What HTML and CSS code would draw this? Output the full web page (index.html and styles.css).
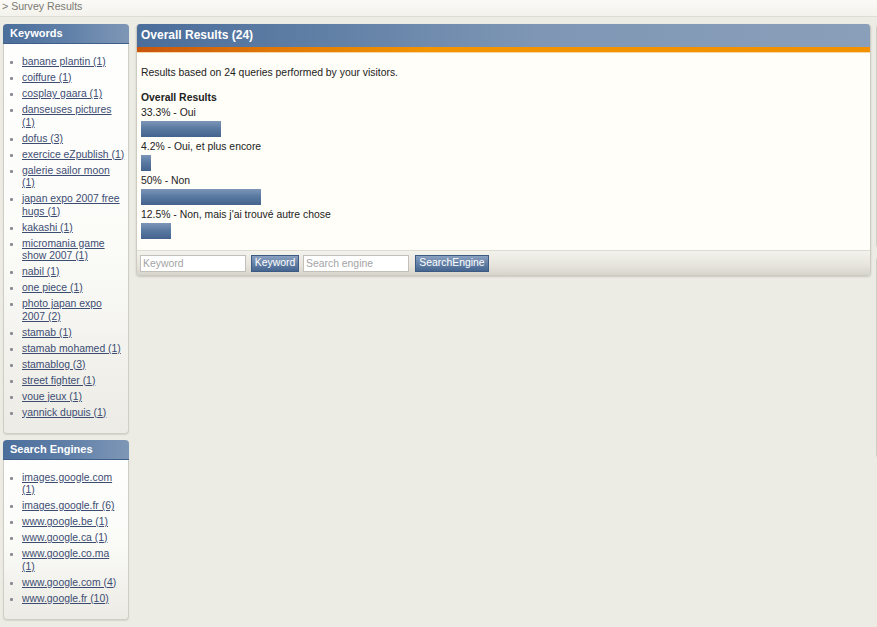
FILE: index.html
```html
<!DOCTYPE html>
<html>
<head>
<meta charset="utf-8">
<title>Survey Results</title>
<link rel="stylesheet" href="styles.css">
</head>
<body>
<div class="crumb">&gt; Survey Results</div>
<div class="layout">
  <div class="side">
    <div class="box">
      <div class="box-head">Keywords</div>
      <ul class="links">
        <li><a href="#">banane plantin (1)</a></li>
        <li><a href="#">coiffure (1)</a></li>
        <li><a href="#">cosplay gaara (1)</a></li>
        <li><a href="#">danseuses pictures (1)</a></li>
        <li><a href="#">dofus (3)</a></li>
        <li><a href="#">exercice eZpublish (1)</a></li>
        <li><a href="#">galerie sailor moon (1)</a></li>
        <li><a href="#">japan expo 2007 free hugs (1)</a></li>
        <li><a href="#">kakashi (1)</a></li>
        <li><a href="#">micromania game show 2007 (1)</a></li>
        <li><a href="#">nabil (1)</a></li>
        <li><a href="#">one piece (1)</a></li>
        <li><a href="#">photo japan expo 2007 (2)</a></li>
        <li><a href="#">stamab (1)</a></li>
        <li><a href="#">stamab mohamed (1)</a></li>
        <li><a href="#">stamablog (3)</a></li>
        <li><a href="#">street fighter (1)</a></li>
        <li><a href="#">voue jeux (1)</a></li>
        <li><a href="#">yannick dupuis (1)</a></li>
      </ul>
    </div>
    <div class="box">
      <div class="box-head">Search Engines</div>
      <ul class="links links-narrow">
        <li><a href="#">images.google.com (1)</a></li>
        <li><a href="#">images.google.fr (6)</a></li>
        <li><a href="#">www.google.be (1)</a></li>
        <li><a href="#">www.google.ca (1)</a></li>
        <li><a href="#">www.google.co.ma (1)</a></li>
        <li><a href="#">www.google.com (4)</a></li>
        <li><a href="#">www.google.fr (10)</a></li>
      </ul>
    </div>
  </div>

  <div class="main">
    <div class="main-head">Overall Results (24)</div>
    <div class="main-stripe"></div>
    <div class="main-body">
      <p class="intro">Results based on 24 queries performed by your visitors.</p>
      <div class="res-title">Overall Results</div>
      <div class="res">
        <div class="res-label">33.3% - Oui</div>
        <div class="bar" style="width:80px"></div>
      </div>
      <div class="res">
        <div class="res-label">4.2% - Oui, et plus encore</div>
        <div class="bar" style="width:10px"></div>
      </div>
      <div class="res">
        <div class="res-label">50% - Non</div>
        <div class="bar" style="width:120px"></div>
      </div>
      <div class="res">
        <div class="res-label">12.5% - Non, mais j'ai trouvé autre chose</div>
        <div class="bar" style="width:30px"></div>
      </div>
    </div>
    <div class="main-foot">
      <input class="field" type="text" placeholder="Keyword">
      <button class="btn btn-kw">Keyword</button>
      <input class="field field-se" type="text" placeholder="Search engine">
      <button class="btn btn-se">SearchEngine</button>
    </div>
  </div>

  <div class="side right">
    <div class="rbox rbox1">
      <div class="rhead"></div>
      <div class="rblock rb1"></div>
    </div>
    <div class="rbox rbox2">
      <div class="rblock rb2"></div>
      <div class="rblock rb3"></div>
    </div>
  </div>
</div>
</body>
</html>
```

FILE: styles.css
```css
html, body {
  margin: 0;
  padding: 0;
  overflow: hidden;
  width: 877px;
  height: 627px;
}
body {
  background: #ecebe4;
  font-family: "Liberation Sans", Arial, sans-serif;
  font-size: 10.4px;
  color: #222;
}
.crumb {
  height: 16px;
  line-height: 12px;
  padding-left: 2px;
  color: #7a7a74;
  font-size: 10.6px;
  background: linear-gradient(to bottom, #fbfaf6, #f3f2ec);
  border-bottom: 1px solid #dedcd3;
}
.layout {
  display: flex;
  align-items: flex-start;
  padding: 7px 0 0 3px;
  width: 1200px;
}
.side {
  width: 126px;
  flex: none;
  display: flex;
  flex-direction: column;
  gap: 6px;
}
.box {
  border: 1px solid #cfcdc4;
  border-top: 0;
  border-radius: 4px;
  background: linear-gradient(to bottom, #ffffff 0%, #fbfbf8 55%, #ecebe5 100%);
  box-shadow: 0 1px 1px #d8d6cd;
}
.box-head {
  height: 19px;
  line-height: 18px;
  margin: 0 -1px;
  padding-left: 7px;
  color: #fff;
  font-weight: bold;
  font-size: 11px;
  border-radius: 4px 4px 0 0;
  background: linear-gradient(to right, #4b6e9b 0%, #5f7fa8 50%, #7f97b6 100%);
  border-bottom: 1px solid #3f5f88;
}
.links {
  list-style: none;
  margin: 0;
  padding: 12px 3px 10px 18px;
}
.links-narrow {
  padding-right: 5px;
}
.links li {
  position: relative;
  line-height: 12.5px;
  padding-bottom: 3.5px;
}
.links li::before {
  content: "";
  position: absolute;
  left: -12px;
  top: 5px;
  width: 3px;
  height: 3px;
  background: #8a8c94;
  border-radius: 1px;
}
.links a {
  color: #3d4d72;
  text-decoration: underline;
}
.main {
  width: 733px;
  flex: none;
  margin-left: 7px;
  border: 1px solid #cdcbc2;
  border-top: 0;
  border-radius: 4px;
  overflow: hidden;
  box-shadow: 0 1px 2px #c9c7be;
}
.main-head {
  height: 23px;
  line-height: 22px;
  padding-left: 4px;
  color: #fff;
  font-weight: bold;
  font-size: 12px;
  background: linear-gradient(to right, #4a6d9a 0%, #6583a8 30%, #7f97b5 55%, #8a9fb9 100%);
}
.main-stripe {
  height: 5px;
  background: linear-gradient(to right, #c8560e 0%, #e37a06 20%, #f39400 40%, #f39100 100%);
  border-bottom: 1px solid #f7d6a6;
}
.main-body {
  background: #fffef8;
  padding: 13px 4px 8px;
}
.intro {
  margin: 0 0 11px;
  line-height: 14px;
}
.res-title {
  font-weight: bold;
  line-height: 14px;
  margin-bottom: 1px;
}
.res-label {
  line-height: 14px;
}
.bar {
  height: 16px;
  margin: 1px 0 3px;
  background: linear-gradient(to bottom, #7d96b8 0%, #5b7aa2 45%, #43638e 100%);
}
.main-foot {
  display: flex;
  align-items: center;
  height: 24px;
  padding: 0 3px;
  border-top: 1px solid #dddbd2;
  background: linear-gradient(to bottom, #f3f2ed 0%, #e6e4dc 60%, #d6d4cb 100%);
}
.field {
  width: 106px;
  height: 17px;
  box-sizing: border-box;
  margin: 0 5px 0 0;
  padding: 0 2px;
  border: 1px solid #c2c0b8;
  background: #fff;
  font-family: "Liberation Sans", Arial, sans-serif;
  font-size: 10.4px;
  color: #333;
}
.field::placeholder {
  color: #a4a4a4;
}
.field-se {
  margin-left: 4px;
}
.btn {
  height: 17px;
  box-sizing: border-box;
  padding: 0 2px;
  border: 1px solid #3d5a82;
  background: linear-gradient(to bottom, #8aa1c0 0%, #6481a8 50%, #45658f 100%);
  color: #fff;
  font-family: "Liberation Sans", Arial, sans-serif;
  font-size: 10.4px;
  line-height: 14px;
}
.btn-kw {
  width: 48px;
}
.btn-se {
  width: 74px;
  margin-left: 1px;
}
.right {
  margin-left: 5px;
  gap: 7px;
}
.rbox {
  border: 1px solid #cfcdc4;
  border-radius: 4px;
  background: #f6f5f0;
  position: relative;
}
.rbox1 {
  height: 223px;
}
.rbox2 {
  height: 201px;
}
.rhead {
  height: 16px;
  background: #5d7aa0;
}
.rblock {
  position: absolute;
  left: 1px;
  width: 30px;
  background: #5a7096;
}
.rb1 { top: 76px; height: 23px; }
.rb2 { top: 58px; height: 17px; }
.rb3 { top: 122px; height: 16px; }
```
